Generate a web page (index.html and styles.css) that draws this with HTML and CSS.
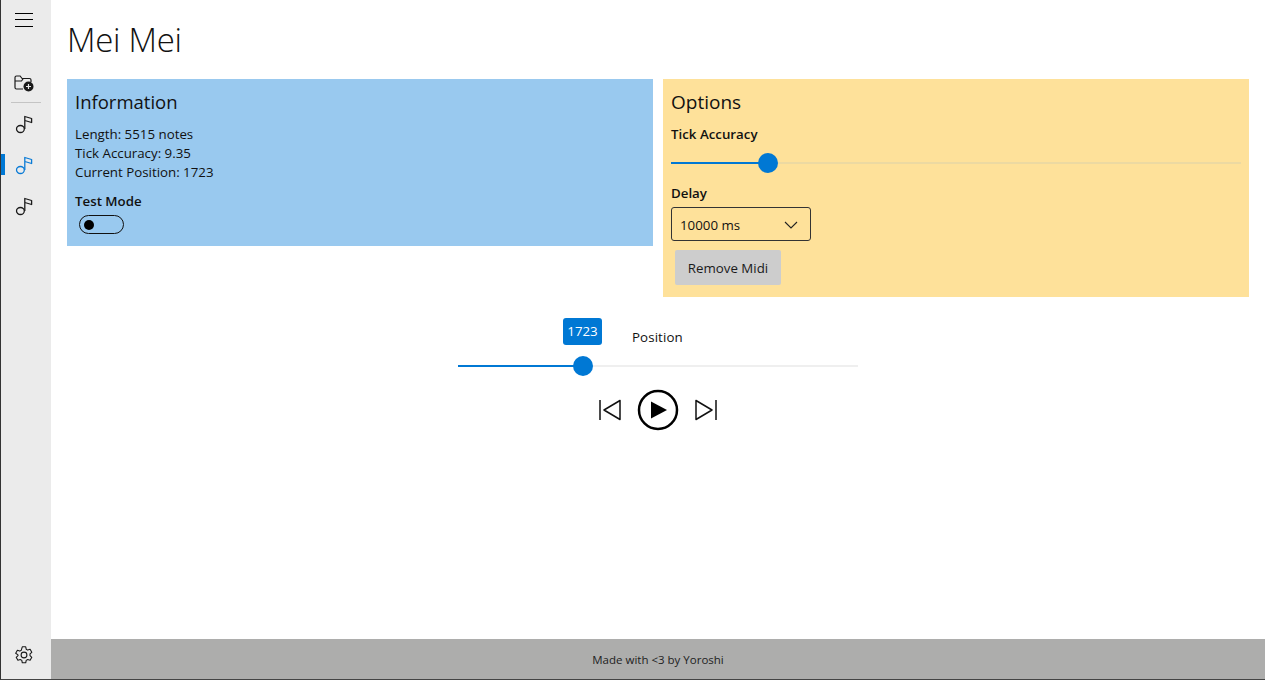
FILE: index.html
```html
<!DOCTYPE html>
<html lang="en">
<head>
  <meta charset="UTF-8" />
  <meta name="viewport" content="width=device-width, initial-scale=1" />
  <title>Mei Mei</title>
  <link rel="stylesheet" href="styles.css">
</head>
<body>
  <div class="app">
    <nav class="sidebar">
      <button class="nav-btn menu-btn" type="button" aria-label="Menu">
        <svg width="20" height="20" viewBox="0 0 20 20"><path d="M1 3.500h18M1 9.500h18M1 16.500h18" stroke="#000" stroke-width="1.100" fill="none"/></svg>
      </button>
      <button class="nav-btn folder-btn" type="button" aria-label="Add folder">
        <svg width="22" height="22" viewBox="0 0 22 22"><path d="M10 17H3.500A1.500 1.500 0 0 1 2 15.500V5.500A1.500 1.500 0 0 1 3.500 4h3.600l2 2.500h7.400A1.500 1.500 0 0 1 18 8v2M2 9h6.500l1.800-2.500" stroke="#1a1a1a" stroke-width="1.200" fill="none"/><circle cx="15.500" cy="14.500" r="5" fill="#1a1a1a"/><path d="M15.500 12v5M13 14.500h5" stroke="#ebebeb" stroke-width="1.200"/></svg>
      </button>
      <div class="nav-sep"></div>
      <button class="nav-btn note" type="button" aria-label="Midi 1">
        <svg width="20" height="22" viewBox="0 0 20 22"><use href="#note"/></svg>
      </button>
      <button class="nav-btn note active" type="button" aria-label="Midi 2">
        <svg width="20" height="22" viewBox="0 0 20 22"><use href="#note"/></svg>
      </button>
      <button class="nav-btn note" type="button" aria-label="Midi 3">
        <svg width="20" height="22" viewBox="0 0 20 22"><use href="#note"/></svg>
      </button>
      <button class="nav-btn settings-btn" type="button" aria-label="Settings">
        <svg width="20" height="20" viewBox="0 0 20 20"><path d="M8.300 1.800h3.400l.5 2.400 1.500.9 2.400-.8 1.700 3-1.800 1.600v1.800l1.800 1.600-1.700 3-2.400-.8-1.500.9-.5 2.400H8.300l-.5-2.400-1.500-.9-2.400.8-1.700-3 1.800-1.600V9.900L1.700 8.300l1.700-3 2.400.8 1.500-.9z" stroke="#1a1a1a" stroke-width="1.100" stroke-linejoin="round" fill="none"/><circle cx="10" cy="10" r="2.900" stroke="#1a1a1a" stroke-width="1.100" fill="none"/></svg>
      </button>
    </nav>

    <div class="content">
      <main class="main">
        <h1>Mei Mei</h1>
        <div class="cards">
          <section class="card card-info">
            <h2>Information</h2>
            <p>Length: 5515 notes</p>
            <p>Tick Accuracy: 9.35</p>
            <p>Current Position: 1723</p>
            <div class="field-label test-label">Test Mode</div>
            <div class="toggle"><span class="knob"></span></div>
          </section>
          <section class="card card-options">
            <h2>Options</h2>
            <div class="field-label">Tick Accuracy</div>
            <div class="slider tick-slider">
              <div class="fill"></div>
              <div class="thumb"></div>
            </div>
            <div class="field-label delay-label">Delay</div>
            <div class="select">
              <span>10000 ms</span>
              <svg width="14" height="8" viewBox="0 0 14 8"><path d="M1 1l6 6 6-6" stroke="#222" stroke-width="1.100" fill="none"/></svg>
            </div>
            <button class="remove-btn" type="button">Remove Midi</button>
          </section>
        </div>

        <div class="player">
          <div class="position-row">
            <span class="bubble">1723</span>
            <span class="position-label">Position</span>
          </div>
          <div class="slider pos-slider">
            <div class="fill"></div>
            <div class="thumb"></div>
          </div>
          <div class="controls">
            <svg width="24" height="24" viewBox="0 0 24 24"><path d="M2 2v20M22 2.500v19L6 12z" stroke="#111" stroke-width="1.500" stroke-linejoin="round" fill="none"/></svg>
            <svg class="play" width="42" height="42" viewBox="0 0 42 42"><circle cx="21" cy="21" r="19" stroke="#000" stroke-width="2.500" fill="none"/><path d="M14 12.500v17L30 21z" fill="#000"/></svg>
            <svg width="24" height="24" viewBox="0 0 24 24"><path d="M22 2v20M2 2.500v19L18 12z" stroke="#111" stroke-width="1.500" stroke-linejoin="round" fill="none"/></svg>
          </div>
        </div>
      </main>
      <footer class="footer">Made with &lt;3 by Yoroshi</footer>
    </div>
  </div>

  <svg class="defs" width="0" height="0">
    <symbol id="note" viewBox="0 0 20 22">
      <ellipse cx="6.400" cy="15" rx="3.900" ry="3.500" stroke="currentColor" stroke-width="1.300" fill="none"/>
      <path d="M10.800 15V2.500L17.600 4.500V8.500L10.800 6.500" stroke="currentColor" stroke-width="1.300" stroke-linejoin="round" fill="none"/>
    </symbol>
  </svg>
</body>
</html>
```

FILE: styles.css
```css
html, body {
  height: 100%;
}
body {
  margin: 0;
  font-family: "Open Sans", "Noto Sans", sans-serif;
  font-size: 13.300px;
  color: #111;
  background: #fff;
  overflow: hidden;
}
button {
  font: inherit;
}
.defs {
  position: absolute;
}
.app {
  display: flex;
  height: 679px;
  border-left: 1px solid #333;
  border-bottom: 1px solid #444;
}

/* sidebar */
.sidebar {
  width: 50px;
  flex-shrink: 0;
  background: #ebebeb;
  display: flex;
  flex-direction: column;
  align-items: center;
}
.nav-btn {
  width: 100%;
  height: 40px;
  padding: 0 4px 0 0;
  border: none;
  background: none;
  display: flex;
  align-items: center;
  justify-content: center;
  position: relative;
  color: #1a1a1a;
}
.menu-btn {
  margin-bottom: 24px;
}
.folder-btn {
  height: 38px;
}
.nav-sep {
  width: 30px;
  height: 1px;
  margin-bottom: 1px;
  background: #c4c4c4;
}
.note {
  height: 41px;
}
.note.active {
  color: #0a7bd6;
}
.note.active::before {
  content: "";
  position: absolute;
  left: 0;
  top: 9px;
  width: 4px;
  height: 21px;
  background: #0078d4;
}
.settings-btn {
  margin-top: auto;
  height: 48px;
}

.content {
  flex: 1;
  display: flex;
  flex-direction: column;
  min-width: 0;
}
.main {
  flex: 1;
  padding: 0 16px;
}
h1 {
  margin: 0;
  padding-top: 17px;
  height: 79px;
  box-sizing: border-box;
  font-size: 33px;
  line-height: 46px;
  font-weight: 300;
  color: #111;
  letter-spacing: -0.300px;
}

/* cards */
.cards {
  display: grid;
  grid-template-columns: 586px 586px;
  gap: 10px;
  align-items: start;
}
.card {
  padding: 8px;
  box-sizing: border-box;
}
.card-info {
  background: #99c9ef;
  height: 167px;
}
.card-options {
  background: #fee19a;
  height: 218px;
}
h2 {
  margin: 0 0 8px;
  font-size: 18.500px;
  line-height: 30px;
  font-weight: 400;
}
.card p {
  margin: 0;
  line-height: 19px;
}
.card-options h2 {
  font-size: 19px;
}
.field-label {
  font-weight: 600;
  line-height: 19px;
}
.test-label {
  margin-top: 10px;
}

/* toggle */
.toggle {
  width: 39px;
  height: 17px;
  margin: 4px 0 0 4px;
  border: 1px solid #111;
  border-radius: 10px;
  display: flex;
  align-items: center;
  padding-left: 4px;
}
.knob {
  width: 10px;
  height: 10px;
  border-radius: 50%;
  background: #000;
}

/* sliders */
.slider {
  position: relative;
  height: 2px;
}
.slider .fill {
  position: absolute;
  left: 0;
  top: 0;
  height: 100%;
  background: #0078d4;
}
.slider .thumb {
  position: absolute;
  top: 50%;
  width: 20px;
  height: 20px;
  margin: -10px 0 0 -10px;
  border-radius: 50%;
  background: #0078d4;
}
.tick-slider {
  background: #ecd9a2;
  margin-top: 18px;
}
.tick-slider .fill {
  width: 97px;
}
.tick-slider .thumb {
  left: 97px;
}
.delay-label {
  margin-top: 20px;
}
.select {
  width: 140px;
  height: 34px;
  margin-top: 4px;
  box-sizing: border-box;
  border: 1px solid #333;
  border-radius: 3px;
  display: flex;
  align-items: center;
  justify-content: space-between;
  padding: 1px 12px 0 8px;
}
.remove-btn {
  display: block;
  margin: 9px 0 0 4px;
  width: 106px;
  height: 35px;
  padding: 0;
  border: none;
  border-radius: 2px;
  background: #cdcdcd;
  color: #1a1a1a;
}

/* player */
.player {
  width: 400px;
  margin: 20px auto 0;
}
.position-row {
  display: flex;
  align-items: center;
  height: 28px;
  padding-left: 105px;
}
.bubble {
  width: 39px;
  height: 27px;
  border-radius: 3px;
  background: #0078d4;
  color: #fff;
  display: flex;
  align-items: center;
  justify-content: center;
}
.position-label {
  margin: 12px 0 0 30px;
  font-weight: 500;
  line-height: 19px;
  letter-spacing: 0.100px;
}
.pos-slider {
  background: #efefef;
  margin-top: 20px;
}
.pos-slider .fill {
  width: 125px;
}
.pos-slider .thumb {
  left: 125px;
}
.controls {
  display: flex;
  align-items: center;
  justify-content: center;
  gap: 15px;
  margin-top: 22px;
}

.footer {
  height: 40px;
  background: #adadac;
  display: flex;
  align-items: center;
  justify-content: center;
  font-size: 11.500px;
  color: #222;
}
```
